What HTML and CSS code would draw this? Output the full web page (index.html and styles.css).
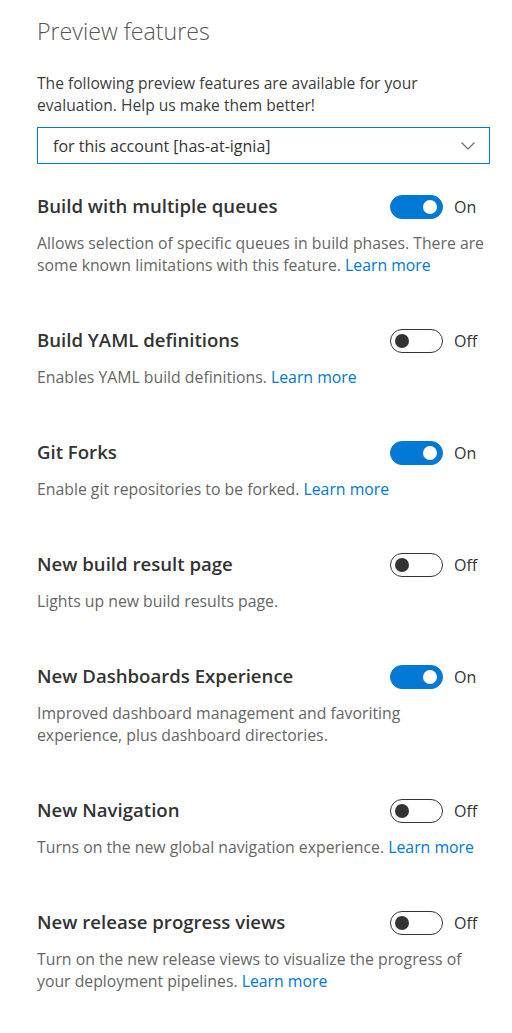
FILE: index.html
```html
<!DOCTYPE html>
<html lang="en">
<head>
<meta charset="utf-8">
<title>Preview features</title>
<link rel="stylesheet" href="styles.css">
</head>
<body>
<main class="panel">
  <h1 class="panel-title">Preview features</h1>
  <p class="intro">The following preview features are available for your evaluation. Help us make them better!</p>
  <div class="dropdown">
    <span class="dropdown-text">for this account [has-at-ignia]</span>
    <svg class="chevron" width="14" height="8" viewBox="0 0 14 8" aria-hidden="true"><path d="M0.5 0.5 L7 7 L13.5 0.5" fill="none" stroke="#666" stroke-width="1.1"/></svg>
  </div>

  <section class="feature">
    <div class="feature-head">
      <h2 class="feature-title">Build with multiple queues</h2>
      <div class="toggle-group"><span class="toggle on"><span class="knob"></span></span><span class="toggle-label">On</span></div>
    </div>
    <p class="feature-desc">Allows selection of specific queues in build phases. There are some known limitations with this feature. <a class="link" href="#">Learn more</a></p>
  </section>

  <section class="feature">
    <div class="feature-head">
      <h2 class="feature-title">Build YAML definitions</h2>
      <div class="toggle-group"><span class="toggle off"><span class="knob"></span></span><span class="toggle-label">Off</span></div>
    </div>
    <p class="feature-desc">Enables YAML build definitions. <a class="link" href="#">Learn more</a></p>
  </section>

  <section class="feature">
    <div class="feature-head">
      <h2 class="feature-title">Git Forks</h2>
      <div class="toggle-group"><span class="toggle on"><span class="knob"></span></span><span class="toggle-label">On</span></div>
    </div>
    <p class="feature-desc">Enable git repositories to be forked. <a class="link" href="#">Learn more</a></p>
  </section>

  <section class="feature">
    <div class="feature-head">
      <h2 class="feature-title">New build result page</h2>
      <div class="toggle-group"><span class="toggle off"><span class="knob"></span></span><span class="toggle-label">Off</span></div>
    </div>
    <p class="feature-desc">Lights up new build results page.</p>
  </section>

  <section class="feature">
    <div class="feature-head">
      <h2 class="feature-title">New Dashboards Experience</h2>
      <div class="toggle-group"><span class="toggle on"><span class="knob"></span></span><span class="toggle-label">On</span></div>
    </div>
    <p class="feature-desc">Improved dashboard management and favoriting <br>experience, plus dashboard directories.</p>
  </section>

  <section class="feature">
    <div class="feature-head">
      <h2 class="feature-title">New Navigation</h2>
      <div class="toggle-group"><span class="toggle off"><span class="knob"></span></span><span class="toggle-label">Off</span></div>
    </div>
    <p class="feature-desc">Turns on the new global navigation experience. <a class="link" href="#">Learn more</a></p>
  </section>

  <section class="feature">
    <div class="feature-head">
      <h2 class="feature-title">New release progress views</h2>
      <div class="toggle-group"><span class="toggle off"><span class="knob"></span></span><span class="toggle-label">Off</span></div>
    </div>
    <p class="feature-desc">Turn on the new release views to visualize the progress of your deployment pipelines. <a class="link" href="#">Learn more</a></p>
  </section>
</main>
</body>
</html>
```

FILE: styles.css
```css
html, body {
  margin: 0;
  padding: 0;
  background: #ffffff;
}

body {
  font-family: "Open Sans", "Noto Sans", "Liberation Sans", sans-serif;
  color: #333333;
}

.panel {
  padding: 14px 22px 30px 37px;
}

.panel-title {
  margin: 0;
  font-size: 23.2px;
  font-weight: 300;
  line-height: 34px;
  color: #555555;
}

.intro {
  margin: 24px 0 0;
  font-size: 15.6px;
  line-height: 22px;
  color: #3c3c3c;
}

.dropdown {
  margin-top: 11px;
  height: 37px;
  box-sizing: border-box;
  border: 1px solid #0078d4;
  display: flex;
  align-items: center;
  justify-content: space-between;
  padding: 0 14px 0 15px;
}

.dropdown-text {
  font-size: 16px;
  color: #333333;
}

.chevron {
  display: block;
}

.feature {
  margin-top: 31px;
}

.feature + .feature {
  margin-top: 53px;
}

.feature-head {
  display: flex;
  align-items: center;
  justify-content: space-between;
  height: 24px;
}

.feature-title {
  margin: 0;
  padding-bottom: 4px;
  font-size: 18.6px;
  font-weight: 600;
  color: #333333;
}

.toggle-group {
  width: 100px;
  display: flex;
  align-items: center;
  gap: 11px;
}

.toggle {
  box-sizing: border-box;
  width: 53px;
  height: 24px;
  border-radius: 12px;
  display: flex;
  align-items: center;
  padding: 0 5px;
}

.toggle.on {
  background: #0078d4;
  border: 1px solid #0078d4;
  justify-content: flex-end;
}

.toggle.off {
  background: #ffffff;
  border: 1px solid #333333;
  justify-content: flex-start;
  padding: 0 4px;
}

.knob {
  width: 14px;
  height: 14px;
  border-radius: 50%;
}

.toggle.on .knob {
  background: #ffffff;
}

.toggle.off .knob {
  background: #333333;
}

.toggle-label {
  font-size: 16px;
  color: #333333;
}

.feature-desc {
  margin: 13px 0 0;
  font-size: 15.8px;
  line-height: 22px;
  color: #666666;
}

.link {
  color: #0078d4;
  text-decoration: none;
}
```
